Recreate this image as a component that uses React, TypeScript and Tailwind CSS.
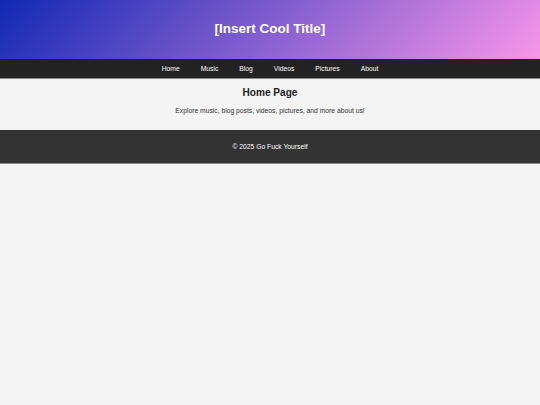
import React from 'react';

const links = ['Home', 'Music', 'Blog', 'Videos', 'Pictures', 'About'];

const App: React.FC = () => {
  return (
    <div className="min-h-[405px] bg-[#f4f4f4] font-['Liberation_Sans',Arial,sans-serif] text-[#333]">
      <header className="h-[59px] flex items-center justify-center bg-[linear-gradient(135deg,#1128b4,#f896ea)]">
        <h1 className="text-[13.5px] font-bold text-white">[Insert Cool Title]</h1>
      </header>

      <nav className="h-[20px] pt-[2px] bg-[#222] border-b border-[#8a8a8a] flex items-center justify-center gap-[21px]">
        {links.map(link => (
          <a key={link} href="#" className="text-[6.75px] text-white">
            {link}
          </a>
        ))}
      </nav>

      <main className="h-[51px] flex flex-col items-center pt-[7px]">
        <h2 className="text-[10.1px] font-bold text-[#222] leading-[14px]">Home Page</h2>
        <p className="mt-[6px] text-[6.75px] text-[#333]">
          Explore music, blog posts, videos, pictures, and more about us!
        </p>
      </main>

      <footer className="h-[34px] pt-[2px] bg-[#333] border-b border-[#8a8a8a] flex items-center justify-center">
        <p className="text-[6.75px] text-white">&copy; 2025 Go Fuck Yourself</p>
      </footer>
    </div>
  );
};

export default App;
